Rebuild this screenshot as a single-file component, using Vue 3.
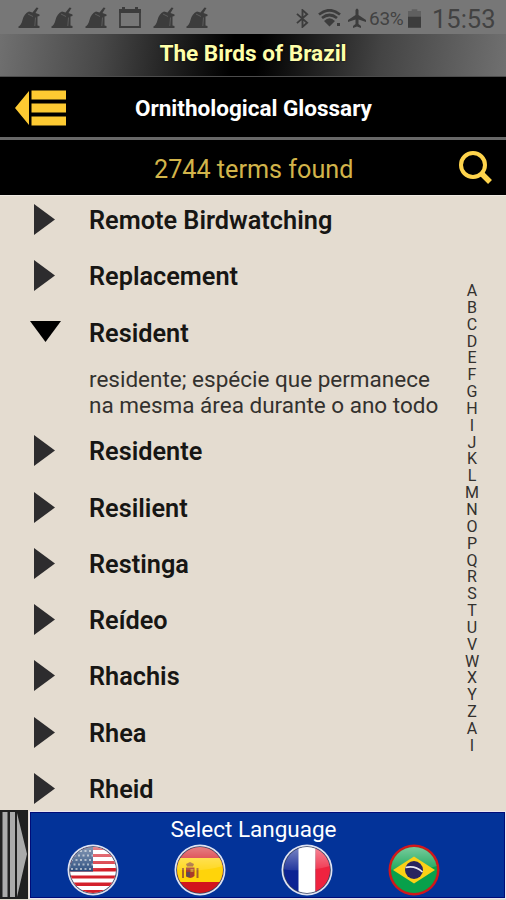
<template>
    <div class="app">
        <div class="status">
            <div class="notifications">
                <svg v-for="(item, index) in notifications" :key="index" class="note" viewBox="0 0 22 22">
                    <g v-if="item === 'broom'">
                        <path class="dark" d="M0 20 Q3.500 18 4.500 13 Q6 6.500 11 4.500 L14.500 5.500 L18.500 0.500 L20.500 1 L17.500 6 L21.500 7.500 V9 L19.500 9.500 V18.500 L21.500 19 V21 H1 Z" />
                        <path class="seam" d="M17.500 10.500 L16.800 19 M10 7 L15 9.500" />
                    </g>
                    <g v-else>
                        <path class="frame" d="M1 3 H21 V20 H1 Z" />
                        <path class="dark" d="M0 2 H22 V6 H0 Z M3 0 H6 V4 H3 Z M16 0 H19 V4 H16 Z" />
                    </g>
                </svg>
            </div>
            <div class="system">
                <svg class="bluetooth" viewBox="0 0 14 20">
                    <path class="line" d="M1 5 L12 14.500 L7 19 V1 L12 5.500 L1 15" />
                </svg>
                <svg class="wifi" viewBox="0 0 24 18">
                    <path class="arc" d="M1 5.500 Q11.500 -3 22 5.500 M4 9 Q11.500 3 19 9" />
                    <path class="dark" d="M6 12 Q11.500 6.500 17 12 L11.500 17.500 Z M19 14 H22 V17 H19 Z" />
                </svg>
                <svg class="plane" viewBox="0 0 18 20">
                    <path class="dark" d="M7.500 2 Q9 -1 10.500 2 V7 L18 12 V14 L10.500 11.500 V16 L13 18 V20 L9 18.500 L5 20 V18 L7.500 16 V11.500 L0 14 V12 L7.500 7 Z" />
                </svg>
                <span class="percent">63%</span>
                <svg class="battery" viewBox="0 0 14 20">
                    <path class="empty" d="M4 0 H10 V2 H14 V8 H0 V2 H4 Z" />
                    <path class="dark" d="M0 8 H14 V20 H0 Z" />
                </svg>
                <span class="clock">15:53</span>
            </div>
        </div>
        <div class="title"><span>The Birds of Brazil</span></div>
        <div class="header">
            <svg class="back" viewBox="0 0 52 36">
                <path d="M0 18 L14 1 V35 Z M16.500 0.500 H51 V9.500 H16.500 Z M16.500 13.500 H51 V22.500 H16.500 Z M16.500 26.500 H51 V35.500 H16.500 Z" />
            </svg>
            <h1>Ornithological Glossary</h1>
        </div>
        <div class="search">
            <p>2744 terms found</p>
            <svg class="magnifier" viewBox="0 0 34 34">
                <circle cx="14" cy="14" r="12" />
                <path d="M22 22 L31 31" />
            </svg>
        </div>
        <div class="content">
            <div class="terms">
                <div v-for="item in terms" :key="item.name" class="term" @click="toggle(item)">
                    <div class="row">
                        <span class="marker">
                            <svg v-if="item.open" class="down" viewBox="0 0 31 21">
                                <path d="M0 0 H31 L15.500 21 Z" />
                            </svg>
                            <svg v-else class="right" viewBox="0 0 21 31">
                                <path d="M0 0 L21 15.500 L0 31 Z" />
                            </svg>
                        </span>
                        <h4>{{ item.name }}</h4>
                    </div>
                    <p v-if="item.open">
                        <span>residente; espécie que permanece</span>
                        <span>na mesma área durante o ano todo</span>
                    </p>
                </div>
            </div>
            <div class="letters">
                <span v-for="(letter, index) in letters" :key="index">{{ letter }}</span>
            </div>
        </div>
        <div class="footer">
            <svg class="handle" viewBox="0 0 28 89">
                <path class="handle-bg" d="M0 0 H28 V89 H0 Z" />
                <path class="handle-bar" d="M2.500 2 H7.500 V87 H2.500 Z M10 2 H15 V87 H10 Z M17 3 L27 44 L17 87 Z" />
            </svg>
            <div class="language">
                <h3>Select Language</h3>
                <div class="flags">
                    <svg v-for="flag in flags" :key="flag" class="flag" viewBox="0 0 52 52">
                        <defs>
                            <clipPath :id="'clip-' + flag"><circle cx="26" cy="26" r="23" /></clipPath>
                            <linearGradient :id="'gloss-' + flag" x1="0" y1="0" x2="0" y2="1">
                                <stop offset="0" stop-color="#fff" stop-opacity="0.5" />
                                <stop offset="1" stop-color="#fff" stop-opacity="0.1" />
                            </linearGradient>
                        </defs>
                        <circle cx="26" cy="26" r="25.500" :fill="flag === 'br' ? '#d3161c' : '#dfe3f2'" />
                        <circle cx="26" cy="26" r="23.800" :fill="flag === 'br' ? '#c32018' : '#35405f'" />
                        <g :clip-path="'url(#clip-' + flag + ')'">
                            <g v-if="flag === 'us'">
                                <path fill="#fff" d="M0 0 H52 V52 H0 Z" />
                                <path fill="#d3202b" d="M0 3 H52 V6 H0 Z M0 10 H52 V13 H0 Z M0 17 H52 V20 H0 Z M0 24 H52 V27.500 H0 Z M0 31.500 H52 V34.500 H0 Z M0 38.500 H52 V42 H0 Z M0 46 H52 V49 H0 Z" />
                                <path fill="#1e4276" d="M0 0 H26 V27.500 H0 Z" />
                                <path class="stars" d="M4 7 H26 M2 11.500 H26 M4 16 H26 M2 20.500 H26 M4 25 H26" />
                            </g>
                            <g v-else-if="flag === 'es'">
                                <path fill="#d2141c" d="M0 0 H52 V52 H0 Z" />
                                <path fill="#ffd40a" d="M0 14 H52 V38 H0 Z" />
                                <path fill="#a4642a" d="M8 24 H10 V34 H8 Z M22.500 24 H24.500 V34 H22.500 Z M12 20 L16 18 L20 20 L19 22.500 H13 Z" />
                                <path fill="#a83c2b" d="M12 23.500 H20.500 V32 Q16 36 12 32 Z" />
                                <path fill="#5c4b54" d="M12.500 28 H16 V33 H12.500 Z" />
                                <path fill="#c98f35" d="M16.500 25 H19.500 V28 H16.500 Z" />
                            </g>
                            <g v-else-if="flag === 'fr'">
                                <path fill="#0c2293" d="M0 0 H18 V52 H0 Z" />
                                <path fill="#fff" d="M17.500 0 H34.500 V52 H17.500 Z" />
                                <path fill="#ef233f" d="M34.500 0 H52 V52 H34.500 Z" />
                            </g>
                            <g v-else>
                                <path fill="#08a04b" d="M0 0 H52 V52 H0 Z" />
                            </g>
                            <path :fill="'url(#gloss-' + flag + ')'" d="M0 0 H52 V21 Q26 29 0 25 Z" />
                            <g v-if="flag === 'br'">
                                <path fill="#fbd116" d="M5 26 L26 12.500 L47 26 L26 39.500 Z" />
                                <circle cx="26" cy="26" r="9" fill="#28245f" />
                                <path class="band" d="M17.500 23.500 Q27 21 34.500 28" />
                            </g>
                        </g>
                    </svg>
                </div>
            </div>
        </div>
    </div>
</template>

<script setup>
    import { ref } from 'vue';

    const notifications = ['broom', 'broom', 'broom', 'calendar', 'broom', 'broom'];

    const terms = ref([
        { name: 'Remote Birdwatching', open: false },
        { name: 'Replacement', open: false },
        { name: 'Resident', open: true },
        { name: 'Residente', open: false },
        { name: 'Resilient', open: false },
        { name: 'Restinga', open: false },
        { name: 'Reídeo', open: false },
        { name: 'Rhachis', open: false },
        { name: 'Rhea', open: false },
        { name: 'Rheid', open: false }
    ]);

    const letters = 'ABCDEFGHIJKLMNOPQRSTUVWXYZAI'.split('');
    const flags = ['us', 'es', 'fr', 'br'];

    // only "Resident" has a definition loaded
    const toggle = (item) => {
        if (item.name === 'Resident') item.open = !item.open;
    };
</script>

<style>
    body {
        background-color: #e4dcd0;
    }
</style>

<style scoped>
    .app {
        display: flex;
        flex-direction: column;
        width: 506px;
        height: 900px;
        overflow: hidden;
        background-color: #e4dcd0;
        font-family: Roboto, "Liberation Sans", sans-serif;
    }

    svg {
        display: block;
        flex: none;
    }

    h1, h3, h4, p {
        margin: 0;
        white-space: nowrap;
    }

    .status {
        display: flex;
        justify-content: space-between;
        height: 34px;
        background-color: #777;
        color: #424242;
    }

    .notifications {
        display: flex;
        gap: 11.8px;
        padding: 7px 0 0 17.5px;
    }

    .note {
        width: 22px;
        height: 22px;
    }

    .dark {
        fill: #3c3c3c;
    }

    .seam {
        stroke: #5c5c5c;
        stroke-width: 1;
        fill: none;
    }

    .frame {
        fill: none;
        stroke: #3c3c3c;
        stroke-width: 1.8;
    }

    .system {
        display: flex;
        align-items: center;
        padding: 2px 12px 0 0;
    }

    .bluetooth {
        width: 13px;
        height: 19px;
        margin-right: 9px;
    }

    .line {
        fill: none;
        stroke: #3c3c3c;
        stroke-width: 2;
    }

    .wifi {
        width: 24px;
        height: 18px;
        margin-right: 6px;
    }

    .arc {
        fill: none;
        stroke: #3c3c3c;
        stroke-width: 2.7;
    }

    .plane {
        width: 18px;
        height: 20px;
        margin-right: 3px;
    }

    .percent {
        width: 39px;
        font-size: 19px;
        letter-spacing: -0.3px;
    }

    .battery {
        width: 13px;
        height: 19px;
        margin-right: 11px;
    }

    .empty {
        fill: #606060;
    }

    .clock {
        width: 62px;
        font-size: 25.500px;
        line-height: 34px;
        padding-top: 2px;
    }

    .title {
        display: flex;
        justify-content: center;
        height: 43px;
        box-sizing: border-box;
        border-bottom: 1px solid #4c4c4c;
        background: linear-gradient(97deg, #707070 0%, #484848 20%, #000 46%, #000 51%, #444 75%, #707070 100%);
        color: #feffa9;
        font-size: 22.600px;
        font-weight: 700;
        line-height: 40px;
        text-shadow: 0 0 2px #000;
    }

    .header {
        display: flex;
        align-items: center;
        height: 63px;
        box-sizing: border-box;
        padding: 2px 0 0 14.500px;
        border-bottom: 3px solid #686868;
        background-color: #000;
        color: #fff;
    }

    .back {
        width: 52px;
        height: 36px;
        margin-right: 68.500px;
        fill: #fdca32;
    }

    .header h1 {
        font-size: 22.500px;
        font-weight: 700;
    }

    .search {
        display: flex;
        align-items: center;
        justify-content: space-between;
        height: 55px;
        padding: 0 13px 0 154px;
        background-color: #000;
        color: #d2b44a;
    }

    .search p {
        font-size: 25.200px;
        line-height: 55px;
        padding-top: 3px;
    }

    .magnifier {
        width: 34px;
        height: 34px;
        fill: none;
        stroke: #ffd44c;
        stroke-width: 4;
    }

    .magnifier path {
        stroke-width: 5.500;
    }

    .content {
        display: flex;
        justify-content: space-between;
        height: 615px;
        box-sizing: border-box;
        border-top: 1px solid #eee9e2;
        overflow: hidden;
    }

    .terms {
        margin-top: -3.500px;
    }

    .row {
        display: flex;
        align-items: center;
        height: 56.250px;
    }

    .marker {
        width: 55px;
        padding-left: 34px;
    }

    .right {
        width: 21px;
        height: 31px;
        margin-top: -2px;
        fill: #2d2c2e;
    }

    .down {
        width: 31px;
        height: 21px;
        margin: -4px 0 0 -4.500px;
        fill: #000;
    }

    .row h4 {
        color: #171614;
        font-size: 25.300px;
        font-weight: 600;
    }

    .term p {
        display: flex;
        flex-direction: column;
        height: 62.500px;
        box-sizing: border-box;
        padding: 4.500px 0 0 89px;
        color: #33312e;
        font-size: 22.500px;
        line-height: 26px;
    }

    .letters {
        display: flex;
        flex-direction: column;
        width: 20px;
        padding: 87px 24px 0 0;
        color: #33312e;
        font-size: 16px;
        line-height: 16.850px;
        text-align: center;
    }

    .footer {
        display: flex;
        justify-content: space-between;
        height: 90px;
    }

    .handle {
        width: 28px;
        height: 89px;
    }

    .handle-bg {
        fill: #202020;
    }

    .handle-bar {
        fill: #ababab;
    }

    .language {
        width: 477px;
        height: 88px;
        box-sizing: border-box;
        margin-top: 1px;
        border: 1px solid #eae6ee;
        outline: 1px solid #000c78;
        outline-offset: -2px;
        background-color: #033399;
    }

    .language h3 {
        padding-top: 2px;
        padding-right: 28px;
        color: #fff;
        font-size: 22.500px;
        font-weight: 400;
        line-height: 30px;
        text-align: center;
    }

    .flags {
        display: flex;
        gap: 55px;
        padding-left: 37px;
        margin-top: -0.500px;
    }

    .flag {
        width: 52px;
        height: 52px;
    }

    .stars {
        stroke: #9aa9bd;
        stroke-width: 1.8;
        stroke-dasharray: 2 2.5;
    }

    .band {
        fill: none;
        stroke: #e9e9f0;
        stroke-width: 1.6;
    }
</style>
